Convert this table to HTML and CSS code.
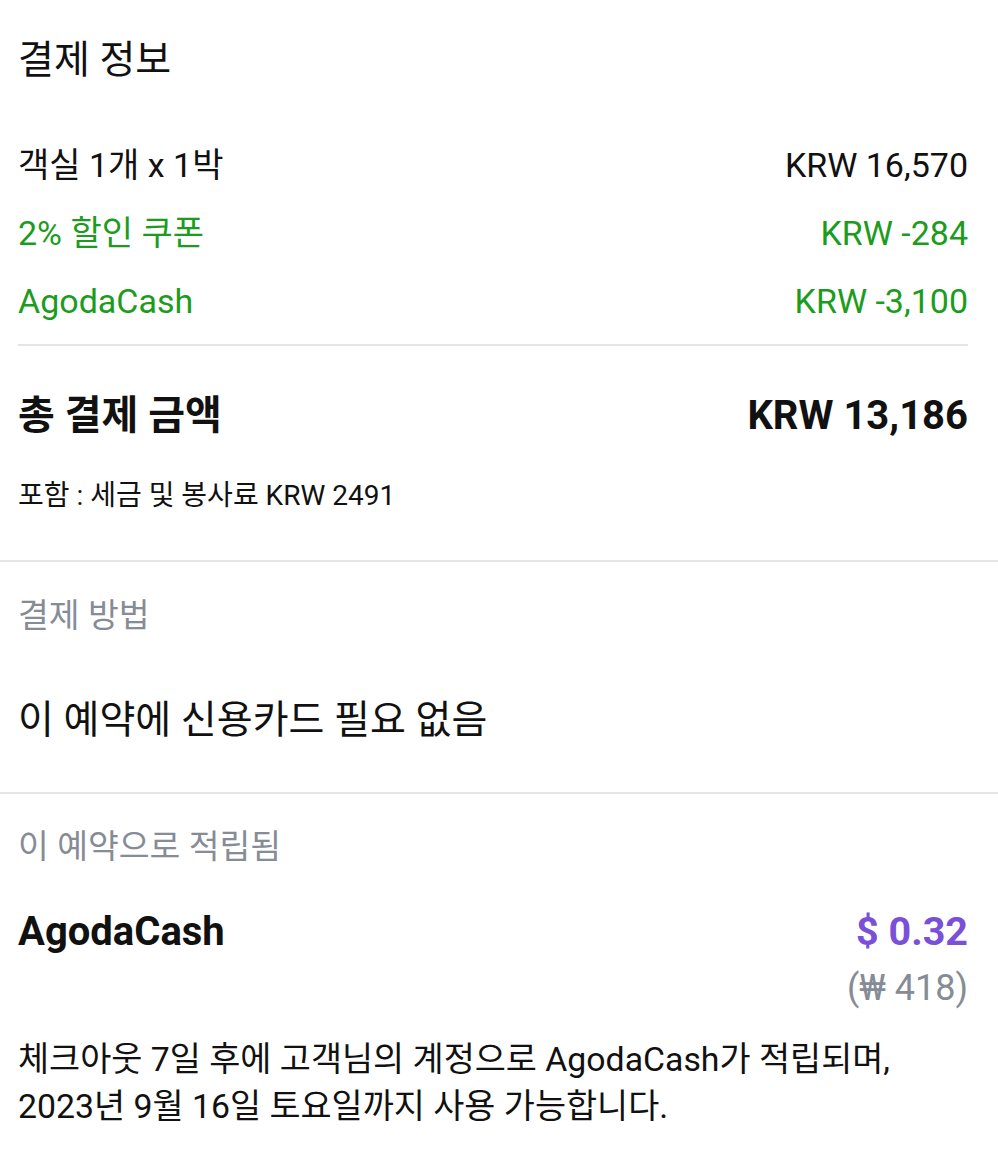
FILE: index.html
```html
<!DOCTYPE html>
<html lang="ko">
<head>
<meta charset="utf-8">
<link rel="stylesheet" href="styles.css">
</head>
<body>
<main class="page">
  <section class="summary">
    <h1 class="title">결제 정보</h1>
    <div class="lines">
      <div class="row"><span>객실 1개 x 1박</span><span>KRW 16,570</span></div>
      <div class="row green"><span>2% 할인 쿠폰</span><span>KRW -284</span></div>
      <div class="row green"><span>AgodaCash</span><span>KRW -3,100</span></div>
    </div>
    <div class="total">
      <div class="row total-row"><span>총 결제 금액</span><span>KRW 13,186</span></div>
      <p class="incl">포함 : 세금 및 봉사료 KRW 2491</p>
    </div>
  </section>
  <section class="method">
    <h2 class="label">결제 방법</h2>
    <p class="method-text">이 예약에 신용카드 필요 없음</p>
  </section>
  <section class="earn">
    <h2 class="label">이 예약으로 적립됨</h2>
    <div class="earn-row">
      <span class="earn-name">AgodaCash</span>
      <div class="earn-amount">
        <span class="usd">$ 0.32</span>
        <span class="krw">(₩ 418)</span>
      </div>
    </div>
    <p class="note">체크아웃 7일 후에 고객님의 계정으로 AgodaCash가 적립되며,<br>2023년 9월 16일 토요일까지 사용 가능합니다.</p>
  </section>
</main>
</body>
</html>
```

FILE: styles.css
```css
* { box-sizing: border-box; margin: 0; padding: 0; }
html, body { background: #fff; }
body {
  font-family: Roboto, "Noto Sans CJK KR", sans-serif;
  color: #111;
  width: 998px;
}
.page { display: flex; flex-direction: column; }
.summary { padding: 0 30px 0 18px; border-bottom: 2px solid #e4e4e4; }
.title {
  font-size: 39px;
  font-weight: 400;
  line-height: 48px;
  padding-top: 36px;
}
.lines {
  padding-top: 57px;
  padding-bottom: 19px;
  border-bottom: 2px solid #e4e4e4;
  display: flex;
  flex-direction: column;
  gap: 20px;
}
.row {
  display: flex;
  justify-content: space-between;
  align-items: center;
  font-size: 34px;
  line-height: 48px;
}
.green { color: #1c9c1c; }
.total { padding: 45px 0 44px; }
.total-row { font-weight: 700; font-size: 40px; line-height: 50px; }
.incl { font-size: 28px; line-height: 40px; margin-top: 35px; }
.method { padding: 31px 30px 47px 18px; border-bottom: 2px solid #e4e4e4; }
.label { font-size: 33.5px; font-weight: 400; color: #868c96; line-height: 46px; }
.method-text { font-size: 39px; line-height: 50px; margin-top: 56px; }
.earn { padding: 30px 30px 0 18px; }
.earn-row { display: flex; justify-content: space-between; align-items: flex-start; margin-top: 36px; }
.earn-name { font-size: 40px; font-weight: 700; line-height: 52px; }
.earn-amount { display: flex; flex-direction: column; align-items: flex-end; }
.usd { color: #7a50d9; font-size: 39.5px; font-weight: 700; line-height: 52px; }
.krw { color: #868c96; font-size: 36px; line-height: 44px; margin-top: 8px; }
.note { font-size: 33.8px; line-height: 47px; margin-top: 26px; }
```
